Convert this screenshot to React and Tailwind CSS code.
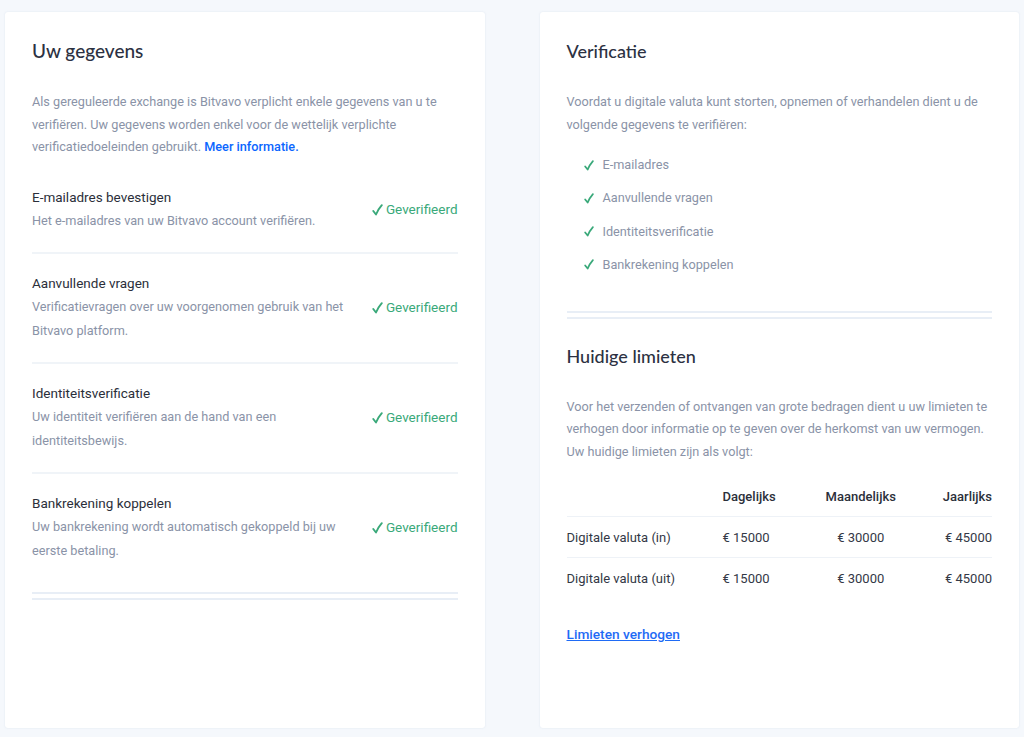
import React from 'react';

const items = [
    { title: 'E-mailadres bevestigen', desc: 'Het e-mailadres van uw Bitvavo account verifiëren.' },
    { title: 'Aanvullende vragen', desc: 'Verificatievragen over uw voorgenomen gebruik van het Bitvavo platform.' },
    { title: 'Identiteitsverificatie', desc: 'Uw identiteit verifiëren aan de hand van een identiteitsbewijs.' },
    { title: 'Bankrekening koppelen', desc: 'Uw bankrekening wordt automatisch gekoppeld bij uw eerste betaling.' },
];

const checks = ['E-mailadres', 'Aanvullende vragen', 'Identiteitsverificatie', 'Bankrekening koppelen'];

const limits = [
    { label: 'Digitale valuta (in)', day: '€ 15000', month: '€ 30000', year: '€ 45000' },
    { label: 'Digitale valuta (uit)', day: '€ 15000', month: '€ 30000', year: '€ 45000' },
];

const heading = "text-[18px] leading-6 font-medium text-[#2c3142] font-['Lato',sans-serif]";
const para = 'text-[12.7px] leading-[22.5px] text-[#8a93a7]';

const Check = ({ className = '' }) => (
    <svg viewBox="0 0 11 12" className={className} fill="none" stroke="#3aa97a" strokeWidth="1.9" strokeLinecap="round" strokeLinejoin="round">
        <path d="M1.3 7 L4 10.5 C5.5 7 7.5 3.8 9.8 1.2" />
    </svg>
);

const DoubleRule = () => (
    <div className="h-[8px] border-y-2 border-[#e8eef6]" />
);

const App = () => {
    return (
        <div className="h-screen bg-[#f5f8fc] px-[5px] pt-3 pb-[9px] grid grid-cols-2 gap-[55px] font-['Roboto',sans-serif]">
            {/* Uw gegevens */}
            <section className="bg-white rounded-[3px] shadow-[0_0_2px_rgba(180,195,215,0.35)] px-[27px] pt-[27px]">
                <h2 className={`${heading} text-[19px]`}>Uw gegevens</h2>
                <p className={`mt-[28px] ${para}`}>
                    Als gereguleerde exchange is Bitvavo verplicht enkele gegevens van u te verifiëren. Uw gegevens worden enkel voor de wettelijk verplichte verificatiedoeleinden gebruikt.{' '}
                    <a href="#" className="font-medium text-[#0b66ff]">Meer informatie.</a>
                </p>
                <div className="mt-[9px]">
                    {items.map((item, i) => (
                        <div
                            key={item.title}
                            className={`flex items-center justify-between gap-6 py-[19px] ${i < items.length - 1 ? 'border-b-2 border-[#f0f4f8]' : ''}`}
                        >
                            <div className="max-w-[320px]">
                                <div className="text-[13.5px] leading-5 mb-0.5 text-[#2b2f3a]">{item.title}</div>
                                <div className="text-[12.7px] leading-6 text-[#8a93a7]">{item.desc}</div>
                            </div>
                            <span className="flex items-center text-[13.5px] text-[#3aa97a] whitespace-nowrap">
                                <Check className="w-[11px] h-[12px] mr-[3px]" />
                                Geverifieerd
                            </span>
                        </div>
                    ))}
                </div>
                <div className="mt-2.5">
                    <DoubleRule />
                </div>
            </section>

            {/* Verificatie */}
            <section className="bg-white rounded-[3px] shadow-[0_0_2px_rgba(180,195,215,0.35)] px-[27px] pt-[27px]">
                <h2 className={heading}>Verificatie</h2>
                <p className={`mt-[28px] ${para}`}>
                    Voordat u digitale valuta kunt storten, opnemen of verhandelen dient u de volgende gegevens te verifiëren:
                </p>
                <ul className="mt-[19px] pl-[17px] space-y-[13.3px]">
                    {checks.map((c) => (
                        <li key={c} className="flex items-center leading-5 text-[12.7px] text-[#8a93a7]">
                            <Check className="w-[10px] h-[11px] mr-[9px]" />
                            {c}
                        </li>
                    ))}
                </ul>
                <div className="mt-[36px]">
                    <DoubleRule />
                </div>

                <h2 className={`${heading} mt-[25px]`}>Huidige limieten</h2>
                <p className={`mt-[28px] ${para}`}>
                    Voor het verzenden of ontvangen van grote bedragen dient u uw limieten te verhogen door informatie op te geven over de herkomst van uw vermogen. Uw huidige limieten zijn als volgt:
                </p>

                <div className="mt-[14px] text-[13px] text-[#333846]">
                    <div className="grid grid-cols-[156px_77px_1fr_70px] h-[40px] items-center border-b border-[#eef2f7] font-medium text-[#2b2f3a]">
                        <span />
                        <span>Dagelijks</span>
                        <span className="text-center">Maandelijks</span>
                        <span className="text-right">Jaarlijks</span>
                    </div>
                    {limits.map((row, i) => (
                        <div
                            key={row.label}
                            className={`grid grid-cols-[156px_77px_1fr_70px] h-[41px] items-center ${i < limits.length - 1 ? 'border-b border-[#eef2f7]' : ''}`}
                        >
                            <span>{row.label}</span>
                            <span>{row.day}</span>
                            <span className="text-center">{row.month}</span>
                            <span className="text-right">{row.year}</span>
                        </div>
                    ))}
                </div>

                <a href="#" className="inline-block mt-[25px] leading-5 text-[13.7px] font-medium text-[#1f6bf5] underline">
                    Limieten verhogen
                </a>
            </section>
        </div>
    );
};

export default App;
